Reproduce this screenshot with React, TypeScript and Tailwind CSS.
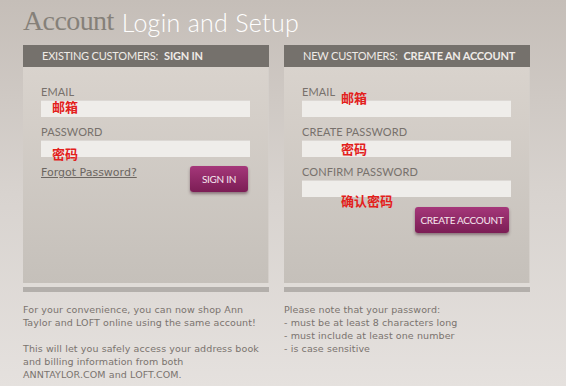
import React from 'react';

const sans = { fontFamily: 'Lato, "Open Sans", sans-serif' };
const body = { fontFamily: '"DejaVu Sans", sans-serif' };

function Field({ label, note, noteClass }: { label: string; note?: string; noteClass?: string }) {
  return (
    <div className="relative">
      <div className="text-[11px] leading-[13px] text-[#77716c] tracking-[0.1px]">{label}</div>
      <div className="mt-[2px] h-[17px] w-[209px] bg-[#efedea] border-t border-[#dcd8d4]" />
      {note && (
        <span
          className={`absolute text-[13px] font-bold leading-none text-[#e3201b] ${noteClass}`}
          style={{ fontFamily: '"Noto Sans CJK SC", sans-serif' }}
        >
          {note}
        </span>
      )}
    </div>
  );
}

function Panel({ title, bold, children }: { title: string; bold: string; children: React.ReactNode }) {
  return (
    <div className="w-[246px] flex flex-col">
      <div className="h-[22px] bg-[#75716c] flex items-center pl-[19px] text-[11px] text-[#efebe7] tracking-[-0.2px]">
        <span>{title}</span>
        <span className="ml-[6px] font-bold">{bold}</span>
      </div>
      <div className="h-[216px] bg-gradient-to-b from-[#d9d3cd] to-[#c5c0ba] pl-[18px] pt-[18px] border-r border-[#d4cfca]">
        {children}
      </div>
      <div className="h-[4px] bg-[#e0dcd8]" />
      <div className="h-[5px] bg-[#b3afab]" />
    </div>
  );
}

function Button({ label, w }: { label: string; w: string }) {
  return (
    <button
      className={`${w} h-[26px] rounded-[3px] bg-gradient-to-b from-[#a5377a] to-[#7c1d55] text-[10px] text-[#f6e8ef] shadow-[0_2px_3px_rgba(60,20,40,0.45)] flex items-center justify-center tracking-[-0.3px]`}
    >
      {label}
    </button>
  );
}

export default function App() {
  return (
    <div
      className="w-[566px] h-[386px] overflow-hidden bg-gradient-to-b from-[#c5beb8] via-[#d8d3cf] to-[#e5e1de] pl-[23px]"
      style={sans}
    >
      {/* Title */}
      <div className="h-[45px] flex items-end pb-[10px]">
        <span
          className="text-[28px] leading-none text-[#858079] tracking-[-0.6px]"
          style={{ fontFamily: '"Liberation Serif", serif' }}
        >
          Account
        </span>
        <span className="ml-[8px] text-[25px] leading-none text-white font-light tracking-[0.3px]">
          Login and Setup
        </span>
      </div>

      <div className="flex gap-[15px]">
        {/* Existing customers */}
        <div className="flex flex-col">
          <Panel title="EXISTING CUSTOMERS:" bold="SIGN IN">
            <div className="flex flex-col gap-[8px]">
              <Field label="EMAIL" note="邮箱" noteClass="left-[11px] top-[15px]" />
              <Field label="PASSWORD" note="密码" noteClass="left-[11px] top-[22px]" />
            </div>
            <div className="flex items-start justify-between w-[207px] mt-[9px]">
              <span className="text-[11px] leading-[13px] text-[#6c6661] underline" style={body}>
                Forgot Password?
              </span>
              <Button label="SIGN IN" w="w-[58px]" />
            </div>
          </Panel>
          <div
            className="mt-[11px] text-[9.5px] leading-[13px] tracking-[0.1px] text-[#7a736e] w-[246px]"
            style={body}
          >
            <p>For your convenience, you can now shop Ann Taylor and LOFT online using the same account!</p>
            <p className="mt-[13px]">
              This will let you safely access your address book and billing information from both ANNTAYLOR.COM
              and LOFT.COM.
            </p>
          </div>
        </div>

        {/* New customers */}
        <div className="flex flex-col">
          <Panel title="NEW CUSTOMERS:" bold="CREATE AN ACCOUNT">
            <div className="flex flex-col gap-[8px]">
              <Field label="EMAIL" note="邮箱" noteClass="left-[39px] top-[6px]" />
              <Field label="CREATE PASSWORD" note="密码" noteClass="left-[39px] top-[17px]" />
              <Field label="CONFIRM PASSWORD" note="确认密码" noteClass="left-[39px] top-[29px]" />
            </div>
            <div className="flex justify-end w-[207px] mt-[10px]">
              <Button label="CREATE ACCOUNT" w="w-[94px]" />
            </div>
          </Panel>
          <div className="mt-[11px] text-[9.5px] leading-[13px] tracking-[0.1px] text-[#7a736e]" style={body}>
            <p>Please note that your password:</p>
            <p>- must be at least 8 characters long</p>
            <p>- must include at least one number</p>
            <p>- is case sensitive</p>
          </div>
        </div>
      </div>
    </div>
  );
}
